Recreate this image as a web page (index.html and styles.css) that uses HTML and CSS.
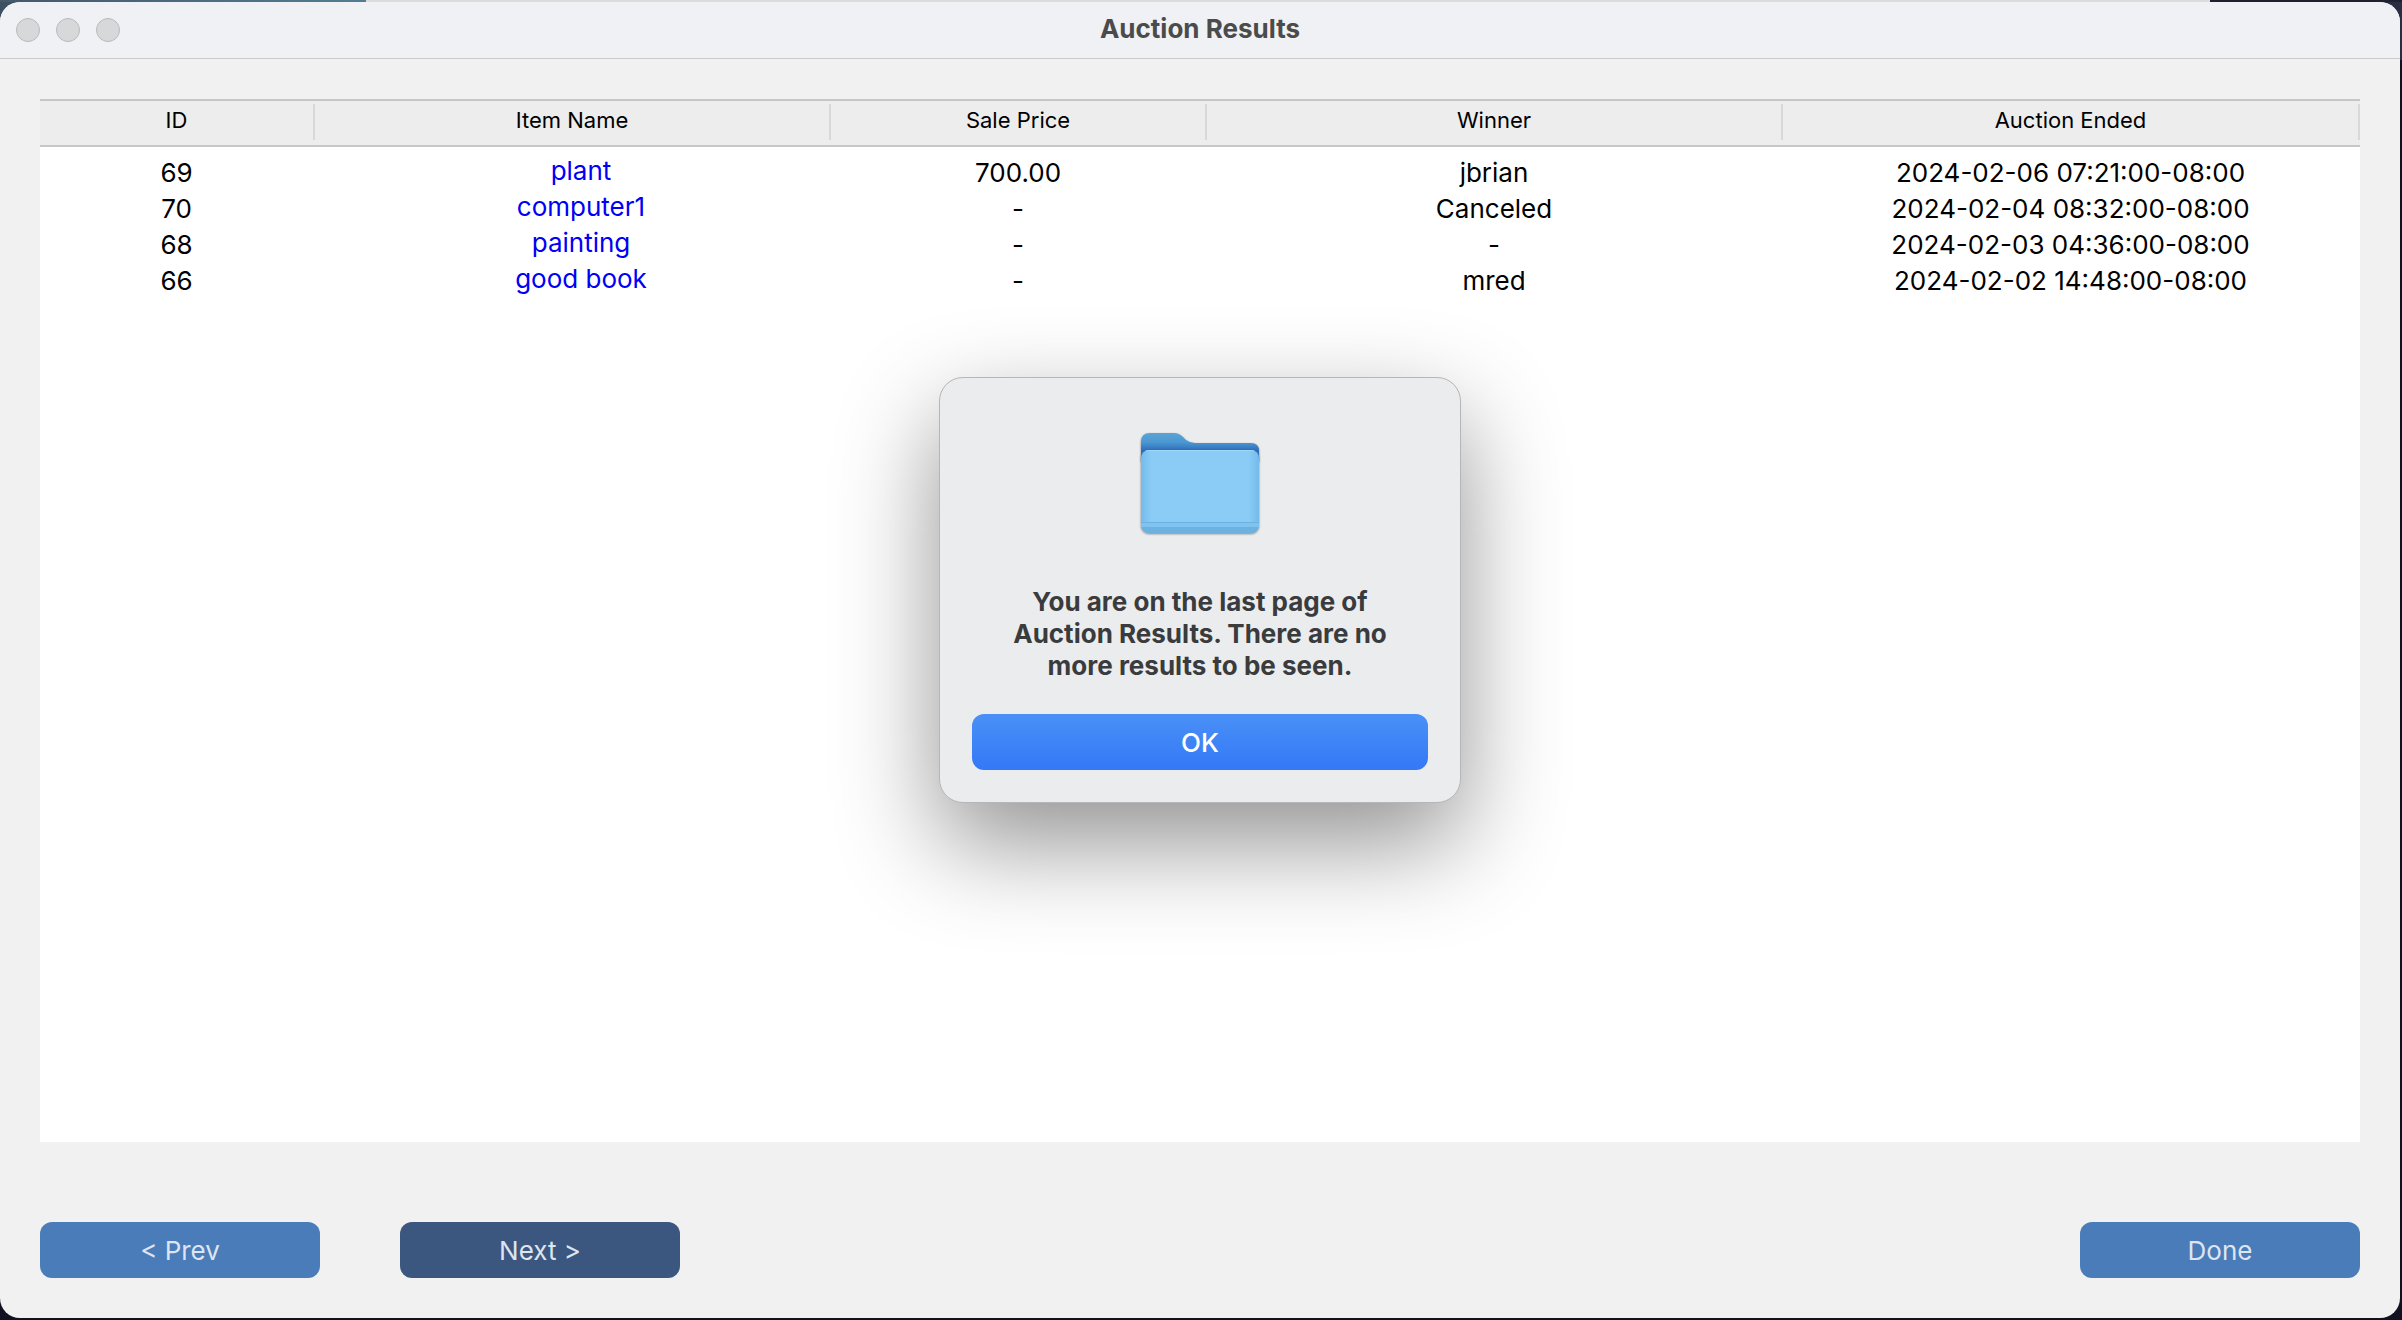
FILE: index.html
```html
<!DOCTYPE html>
<html lang="en">
<head>
<meta charset="utf-8">
<title>Auction Results</title>
<link rel="stylesheet" href="styles.css">
</head>
<body>
<div class="window">
  <header class="titlebar">
    <div class="lights">
      <button class="light" type="button" aria-label="Close"></button>
      <button class="light" type="button" aria-label="Minimize"></button>
      <button class="light" type="button" aria-label="Zoom"></button>
    </div>
    <h1 class="title">Auction Results</h1>
  </header>
  <main class="content">
    <div class="results">
      <table class="grid">
        <colgroup>
          <col class="col-id"><col class="col-item"><col class="col-price"><col class="col-winner"><col class="col-ended">
        </colgroup>
        <thead>
          <tr><th scope="col">ID</th><th scope="col">Item Name</th><th scope="col">Sale Price</th><th scope="col">Winner</th><th scope="col">Auction Ended</th></tr>
        </thead>
        <tbody>
          <tr><td>69</td><td class="item"><a href="#69">plant</a></td><td>700.00</td><td>jbrian</td><td>2024-02-06 07:21:00-08:00</td></tr>
          <tr><td>70</td><td class="item"><a href="#70">computer1</a></td><td>-</td><td>Canceled</td><td>2024-02-04 08:32:00-08:00</td></tr>
          <tr><td>68</td><td class="item"><a href="#68">painting</a></td><td>-</td><td>-</td><td>2024-02-03 04:36:00-08:00</td></tr>
          <tr><td>66</td><td class="item"><a href="#66">good book</a></td><td>-</td><td>mred</td><td>2024-02-02 14:48:00-08:00</td></tr>
        </tbody>
      </table>
    </div>
    <footer class="actions">
      <button class="nav" type="button">&lt; Prev</button>
      <button class="nav nav-active" type="button">Next &gt;</button>
      <button class="nav nav-done" type="button">Done</button>
    </footer>
  </main>
  <div class="alert" role="alertdialog" aria-labelledby="alert-text">
    <svg class="folder" viewBox="0 0 128 128" aria-hidden="true">
      <defs>
        <linearGradient id="back" x1="0" y1="0" x2="0" y2="1">
          <stop offset="0" stop-color="#5ba4d6"/><stop offset=".35" stop-color="#4a96d0"/><stop offset=".62" stop-color="#2f6dbd"/><stop offset="1" stop-color="#3f86cc"/>
        </linearGradient>
        <linearGradient id="edge" x1="0" y1="0" x2="1" y2="0">
          <stop offset="0" stop-color="#74bbea"/><stop offset=".09" stop-color="#8accf6"/><stop offset=".91" stop-color="#8accf6"/><stop offset="1" stop-color="#74bbea"/>
        </linearGradient>
        <clipPath id="front"><rect x="5" y="32" width="118" height="83" rx="8"/></clipPath>
      </defs>
      <path class="folder-shape" fill="url(#back)" d="M5 24q0-9 9-9h24q5 0 9 4l3 3q4 3 9 3h56q8 0 8 8v10H5z"/>
      <rect class="folder-shape" x="5" y="32" width="118" height="83" rx="8" fill="url(#edge)"/>
      <g clip-path="url(#front)">
        <path fill="#a4d8f9" d="M5 32h118v1H5z"/>
        <path fill="#80c3f0" d="M5 104h118v6H5z"/>
        <path fill="#6cb2e1" d="M5 104h118v1H5zM5 109h118v6H5z"/>
      </g>
    </svg>
    <p class="message" id="alert-text">You are on the last page of Auction Results. There are no more results to be seen.</p>
    <button class="ok" type="button">OK</button>
  </div>
</div>
</body>
</html>
```

FILE: styles.css
```css
* {
  box-sizing: border-box;
}

body {
  margin: 0;
  padding: 2px 2px 2px 0;
  min-height: 100vh;
  display: flex;
  font-family: Inter, "Liberation Sans", sans-serif;
  font-size: 26px;
  color: #000;
  background: linear-gradient(90deg, #44586c, #537c92 366px, #dcdcdc 366px, #dcdcdc 92%, #20212f 92%) top / 100% 2px no-repeat,
    linear-gradient(90deg, #3d5062 50%, #2a2e42 50%) top / 100% 60px no-repeat,
    #12111f;
}

button {
  margin: 0;
  padding: 0;
  border: 0;
  font: inherit;
}

.window {
  position: relative;
  flex: 1;
  display: flex;
  flex-direction: column;
  border-radius: 20px;
  overflow: hidden;
  background: #f1f1f1;
}

.titlebar {
  display: grid;
  grid-template-columns: 1fr auto 1fr;
  align-items: center;
  height: 57px;
  padding: 0 16px;
  background: #f0f1f4;
  border-bottom: 1px solid #c9cacc;
}

.lights {
  display: flex;
  gap: 16px;
}

.light {
  width: 24px;
  height: 24px;
  border: 1px solid #b9babc;
  border-radius: 50%;
  background: #d7d8da;
}

.title {
  margin: 0;
  font-size: 26px;
  line-height: 32px;
  padding-bottom: 2px;
  font-weight: 700;
  color: #4b4b4c;
}

.content {
  flex: 1;
  display: flex;
  flex-direction: column;
  gap: 80px;
  padding: 40px;
}

.results {
  flex: 1;
  background: #fff;
}

.grid {
  width: 100%;
  table-layout: fixed;
  border-collapse: separate;
  border-spacing: 0;
  text-align: center;
}

.col-id { width: 275px; }
.col-item { width: 516px; }
.col-price { width: 376px; }
.col-winner { width: 576px; }
.col-ended { width: 577px; }

th {
  height: 48px;
  padding: 0 2px 6px 0;
  border: solid #c6c6c6;
  border-width: 2px 0;
  background: linear-gradient(#d9d9d9, #d9d9d9) right 3px / 2px 36px no-repeat, #ededed;
  font-size: 22px;
  line-height: 28px;
  font-weight: 400;
}

td {
  height: 36px;
  padding: 0 2px 0 0;
  line-height: 36px;
}

tbody::before {
  content: "";
  display: table-row;
  height: 8px;
}

.item {
  padding: 0 2px 4px 18px;
  line-height: 32px;
}

.item a {
  color: #0000f5;
  text-decoration: none;
}

.actions {
  display: flex;
  gap: 80px;
}

.nav {
  width: 280px;
  height: 56px;
  border-radius: 12px;
  background: #4b7cba;
  color: #dee4f0;
}

.nav-active {
  background: #3b577f;
}

.nav-done {
  margin-left: auto;
}

.alert {
  position: absolute;
  top: 375px;
  left: 50%;
  transform: translateX(-50%);
  display: flex;
  flex-direction: column;
  align-items: center;
  width: 522px;
  padding: 40px 32px 32px;
  border: 1px solid #b4b6b8;
  border-radius: 24px;
  background: #ebecee;
  box-shadow: 0 40px 100px rgba(0, 0, 0, .43);
}

.folder {
  width: 128px;
  height: 128px;
}

.folder-shape {
  filter: drop-shadow(0 1px 1px rgba(0, 0, 0, .45));
}

.message {
  margin: 40px 24px 32px;
  font-size: 26px;
  line-height: 32px;
  font-weight: 700;
  text-align: center;
  color: #3a3b3d;
}

.ok {
  width: 100%;
  height: 56px;
  border-radius: 12px;
  background: linear-gradient(#4a90f7, #3478f6);
  color: #fff;
  font-weight: 500;
}
```
